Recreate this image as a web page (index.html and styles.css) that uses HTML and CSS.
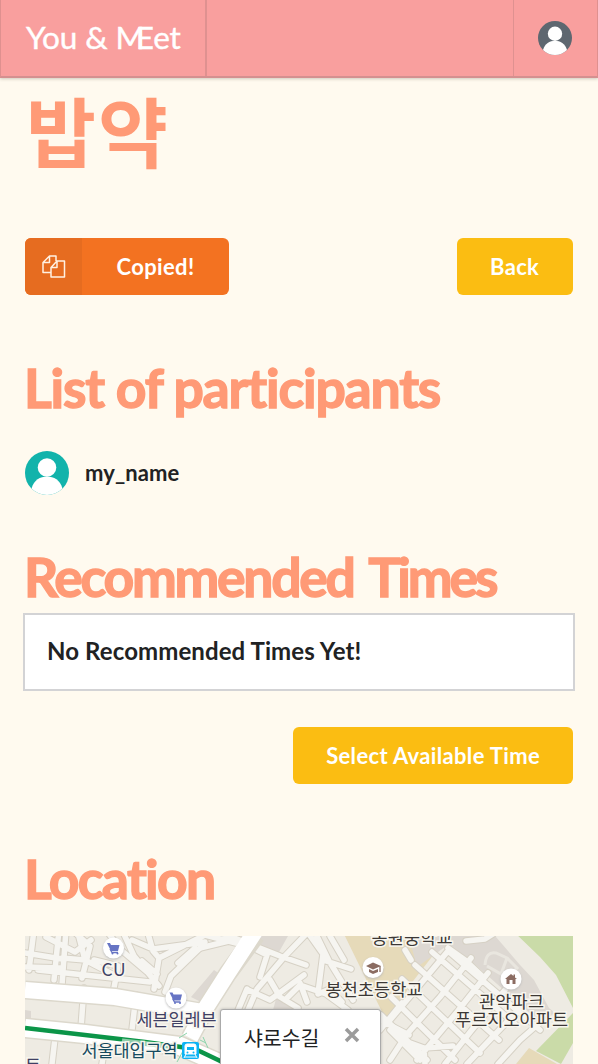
FILE: index.html
```html
<!DOCTYPE html>
<html lang="en">
<head>
<meta charset="utf-8">
<title>You &amp; MEet</title>
<link rel="stylesheet" href="styles.css">
</head>
<body>
<header class="navbar">
  <a class="brand">You &amp; <span class="brand-m">M</span>Eet</a>
  <a class="account">
    <svg class="avatar-small" viewBox="0 0 44 44"><circle cx="22" cy="22" r="22" fill="#5e6770"/><circle cx="22" cy="16.5" r="9.3" fill="#fff"/><path d="M6.500 37.600C9 29 15 25.500 22 25.500S35 29 37.500 37.600A22 22 0 0 1 6.500 37.600Z" fill="#fff"/></svg>
  </a>
</header>
<main class="page">
  <h1 class="title">밥약</h1>
  <div class="actions">
    <button class="button copied">
      <span class="button-icon"><svg viewBox="0 0 24 24" width="24" height="24" fill="none" stroke="#fff1e2" stroke-width="1.500" stroke-linejoin="round"><path d="M8.500 17.500H1V7.500L7.500 1H14V6M1 7.500H7.500V1M9 12.500L15 6H22.500V22H9ZM9 12.500H15V6"/></svg></span>
      <span class="button-label">Copied!</span>
    </button>
    <button class="button back">Back</button>
  </div>
  <h2 class="heading participants-heading">List of participants</h2>
  <div class="participant">
    <svg class="avatar" viewBox="0 0 44 44"><circle cx="22" cy="22" r="22" fill="#12b3ab"/><circle cx="22" cy="16.500" r="9.300" fill="#fff"/><path d="M6.500 37.600C9 29 15 25.500 22 25.500S35 29 37.500 37.600A22 22 0 0 1 6.500 37.600Z" fill="#fff"/></svg>
    <span>my_name</span>
  </div>
  <h2 class="heading times-heading">Recommended <span class="times-word">Times</span></h2>
  <div class="times">No Recommended Times Yet!</div>
  <div class="select-row"><button class="button">Select Available Time</button></div>
  <h2 class="heading location-heading">Location</h2>
  <div class="map">
    <svg class="map-canvas" viewBox="25 936 548 128">
      <defs>
        <g id="streets">
          <path d="M59 930L54 980M34 930L29 970M66 930L62 985M25 953L62 959M25 967L62 968M46 937L75 952L91 940M38 970L150 982M62 958L85 960L79 937M85 960L112 974M72 930L90 946L82 978M94 960L118 966L114 988M106 930L121 950L147 972M122 930L134 956L159 986M147 930L153 951L159 958L154 989M132 940L153 949L205 942M142 961L157 974M159 958L205 935M171 976L203 945M171 976L165 992M178 963L195 948"/>
          <path d="M84 988L81 1028M136 995L132 1030M55 1038L52 1064M105 1045L102 1064"/>
          <path d="M200 948L237 939L280 956L306 965M237 939L213 930M201 934L240 944M251 947L267 955L260 977M310 930L285 956L257 989L248 1010M248 990L270 1000L304 975M247 989L236 1015M270 980L280 997L298 1008M285 1000L300 985L326 994L348 1010M300 983L307 1002M306 930L323 954L318 993M314 930L329 961L353 1000M323 960L351 969M318 994L330 989L342 1002M330 936L344 960M380 1030L402 1003M380 1020L409 1035M390 1030L420 1060"/>
          <path d="M448 951L418 987L390 1020M415 965L499 1040M432 952L515 1024M448 951L540 1030M402 979L480 1053M391 997L455 1060M381 1015L427 1060M471 958L440 997L407 1034L390 1060M488 973L457 1012L417 1060M505 990L471 1031L445 1064M523 1005L485 1045L467 1064M543 1020L520 1040L498 1064M448 948L465 960L482 976M405 950L411 960M402 1040L424 1048L453 1046M424 1048L425 1064M466 941L485 939L493 934"/>
        </g>
      </defs>
      <rect x="25" y="936" width="548" height="128" fill="#eeebe3"/>
      <path d="M342 930L385 1018H392L410 985L445 940V930Z" fill="#e6dab9"/>
      <path d="M407 930H490L520 965L534 980L549 1008L555 1013L540 1022L470 960L445 947L417 967Z" fill="#ddd8d2"/>
      <path d="M512 930H573V1008L556 975L540 957Z" fill="#cadba8"/>
      <path d="M573 1013V1043L561 1064L536 1051Z" fill="#cadba8"/>
      <path d="M529 1048L557 1064H516Z" fill="#e6dab9"/>
      <path d="M214 970L227 979L203 1003L191 997ZM240 936H288L279 952L264 950ZM276 999L298 1007L286 1018L273 1010ZM25 1010L31 1011V1021H25Z" fill="#ddd8d2"/>
      <use href="#streets" class="street-edge"/>
      <use href="#streets" class="street-fill"/>
      <path d="M485 965Q486 951 496 953L507 958L501 974L487 966M507 958L517 968L509 976" fill="none" stroke="#e9e6df" stroke-width="3"/>
      <path d="M25 990L115 997L202 1012M256 935L228 973L207 1006L190 1038" fill="none" stroke="#dcd8cc" stroke-width="19"/>
      <path d="M25 1028L85 1034L180 1046L235 1070" fill="none" stroke="#dcd8cc" stroke-width="21"/>
      <path d="M25 990L115 997L202 1012M256 930L228 973L207 1006L190 1038" fill="none" stroke="#fff" stroke-width="16"/>
      <path d="M25 1028L85 1034L180 1046L235 1070" fill="none" stroke="#fff" stroke-width="18"/>
      <path d="M25 1028L85 1035L145 1042L195 1049L235 1068" fill="none" stroke="#0b9548" stroke-width="4.500"/>
      <path d="M122 1041L177 1047" stroke="#8fcdaa" stroke-width="5"/>
      <path d="M179 1038L187 1033M203 1037L208 1048M177 1062L183 1051M200 1040L206 1043" stroke="#8cd4ac" stroke-width="1"/>
      <g class="pins">
        <circle cx="113.500" cy="948" r="10.500"/><circle cx="176" cy="998" r="10.500"/><circle cx="373" cy="967.500" r="10.500"/><circle cx="511" cy="979" r="10.500"/>
      </g>
      <g id="cart" fill="#6674c4"><path d="M107 943H110L111 945H119.500L118 951H111Z"/><path d="M110 949L112 952.500H118" fill="none" stroke="#6674c4" stroke-width="1.300"/><circle cx="112.500" cy="953.500" r="1"/><circle cx="117.500" cy="953.500" r="1"/></g>
      <use href="#cart" x="62.500" y="49.500"/>
      <path d="M366 966L373 962.500L381 966L373 969.500ZM369 969L373 971L378 969V972L373 974L369 972Z" fill="#8b6c62"/><path d="M380 966V972" stroke="#8b6c62" stroke-width="1.300"/>
      <path d="M505 979L511 974L513.500 976V974.500H515V977.500L517 979H515.500V984H512.500V980H509.500V984H506.500V979Z" fill="#8b6c62"/>
      <rect x="182" y="1042" width="17" height="17" rx="2" fill="#0eb3f4"/>
      <path d="M187 1044H194Q196 1044 196 1046V1054H185V1046Q185 1044 187 1044ZM186 1054L184 1058M195 1054L197 1058M185 1057H196" fill="#fff" stroke="#fff" stroke-width="1"/>
      <path d="M187 1047H194V1050H187Z" fill="#0eb3f4"/><circle cx="187.500" cy="1052.500" r="1" fill="#0eb3f4"/><circle cx="193.500" cy="1052.500" r="1" fill="#0eb3f4"/>
      <g class="places">
        <text x="101.500" y="975.500" textLength="24" class="shop">CU</text>
        <text x="136.500" y="1025.500" textLength="80" class="shop">세븐일레븐</text>
        <text x="81.500" y="1056.500" textLength="96" class="station">서울대입구역</text>
        <text x="25" y="1072" class="shop">트</text>
        <text x="371.500" y="943.500" textLength="81">봉원중학교</text>
        <text x="325.500" y="996" textLength="97">봉천초등학교</text>
        <text x="479" y="1007.500" textLength="65">관악파크</text>
        <text x="455" y="1025.500" textLength="113">푸르지오아파트</text>
      </g>
    </svg>
    <div class="map-popup"><span>샤로수길</span><svg viewBox="0 0 16 16" width="16" height="16"><path d="M2 2L14 14M14 2L2 14" stroke="#9b9b9b" stroke-width="3.500"/></svg></div>
  </div>
</main>
</body>
</html>
```

FILE: styles.css
```css
* { box-sizing: border-box; }
body {
  margin: 0;
  height: 1064px;
  overflow: hidden;
  background: #fffaef;
  color: #212223;
  font-family: Lato, "Noto Sans CJK KR", sans-serif;
}
.navbar {
  display: flex;
  justify-content: space-between;
  height: 78px;
  background: #f99f9e;
  border: 1px solid #df908f;
  border-top: 0;
  border-bottom: 2px solid #d59090;
  box-shadow: 0 1px 3px rgba(70, 60, 40, .25);
}
.brand {
  display: flex;
  align-items: center;
  width: 206px;
  padding: 0 0 3px 25px;
  border-right: 2px solid #df9190;
  color: #fff;
  font-size: 31.5px;
  letter-spacing: -.1px;
  white-space: pre;
  -webkit-text-stroke: .4px #fff;
}
.brand-m { letter-spacing: -9px; }
.account {
  display: flex;
  align-items: center;
  width: 84px;
  padding-left: 24px;
  border-left: 1px solid #df9190;
}
.avatar-small { width: 34px; height: 34px; }
.page { padding: 0 25px; }
.title, .heading { margin: 0; color: #ff9a76; font-weight: 700; white-space: nowrap; }
.title {
  height: 160px;
  padding: 5px 0 0 1px;
  font: 700 76px/92px "Noto Sans CJK KR", sans-serif;
  letter-spacing: 2px;
}
.actions { display: flex; justify-content: space-between; }
.button {
  display: flex;
  align-items: center;
  height: 57px;
  padding: 0 33px;
  border: 0;
  border-radius: 6px;
  background: #fbbd12;
  color: #fff;
  font: 700 22px/57px Lato, sans-serif;
  letter-spacing: .34px;
}
.back { width: 116px; }
.copied { width: 204px; padding: 0; overflow: hidden; background: #f37221; }
.button-icon {
  display: flex;
  align-items: center;
  justify-content: center;
  width: 57px;
  height: 57px;
  background: #e66c20;
}
.button-label { flex: 1; text-align: center; }
.heading {
  height: 60px;
  font-size: 53.5px;
  line-height: 58px;
  text-indent: -1px;
  -webkit-text-stroke: 1.4px #ff9a76;
}
.participants-heading { margin-top: 63px; letter-spacing: -1.2px; }
.participant {
  display: flex;
  align-items: center;
  gap: 16px;
  height: 44px;
  margin-top: 33px;
  font-size: 22px;
  font-weight: 700;
  letter-spacing: .1px;
}
.participant span { padding-bottom: 2px; }
.avatar { width: 44px; height: 44px; }
.times-heading { margin-top: 52px; letter-spacing: -2.3px; }
.times-word { margin-left: 4px; letter-spacing: -3px; }
.times {
  height: 78px;
  margin: 6px -2px 0;
  padding: 0 22px;
  border: 2px solid #d3d3d5;
  background: #fff;
  font-size: 24px;
  font-weight: 700;
  line-height: 72px;
  letter-spacing: .1px;
}
.select-row { display: flex; justify-content: flex-end; margin-top: 36px; }
.location-heading { margin-top: 65px; letter-spacing: -1.7px; }
.map { position: relative; height: 128px; margin-top: 27px; overflow: hidden; }
.map-canvas { display: block; width: 548px; height: 128px; }
.street-edge, .street-fill { fill: none; stroke-linejoin: round; stroke-linecap: round; }
.street-edge { stroke: #d6d1c5; stroke-width: 7.500px; }
.street-fill { stroke: #f6f5f1; stroke-width: 5.500px; }
.pins { fill: #fff; filter: drop-shadow(0 1px 1px #bbb); }
.places {
  fill: #3c3835;
  stroke: #f8f6ef;
  stroke-width: 3px;
  paint-order: stroke;
  font: 17.5px "Noto Sans CJK KR", sans-serif;
}
.shop { fill: #3f4064; }
.station { fill: #164b5f; }
.map-popup {
  position: absolute;
  top: 73px;
  left: 195px;
  display: flex;
  align-items: center;
  justify-content: space-between;
  width: 161px;
  height: 62px;
  padding: 0 20px 11px 23px;
  border: 1px solid #aaa;
  border-radius: 3px;
  background: #fff;
  box-shadow: 0 0 3px rgba(0, 0, 0, .25);
  font: 20.5px "Noto Sans CJK KR", sans-serif;
}
.map-popup span { padding-top: 4px; }
```
